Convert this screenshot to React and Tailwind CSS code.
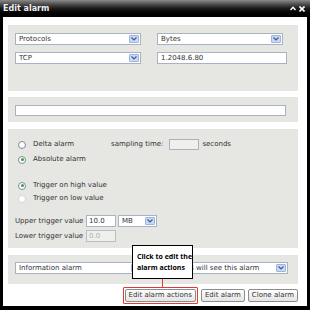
import React from 'react';

const Chevron = () => (
  <span className="flex items-center justify-center w-[10px] h-[8px] mr-[1px] bg-[#c9d9f2] border border-[#9fb5dd] rounded-[1px]">
    <svg width="6" height="4" viewBox="0 0 6 4">
      <path d="M0.5 0.5 L3 3 L5.5 0.5" stroke="#3b5a99" strokeWidth="1.2" fill="none" />
    </svg>
  </span>
);

const Select = ({ value, className = '' }) => (
  <div className={`flex items-center justify-between h-[12px] bg-white border border-[#a8b3c2] ${className}`}>
    <span className="pl-[3px] text-[7px] text-[#333] leading-none whitespace-nowrap">{value}</span>
    <Chevron />
  </div>
);

const Radio = ({ checked, faded, label }) => (
  <div className="flex items-center h-[13px]">
    <span
      className={`flex items-center justify-center w-[8px] h-[8px] rounded-full border bg-white ${
        faded ? 'border-[#d6d6d6]' : 'border-[#7d8aa0]'
      }`}
    >
      {checked && <span className="w-[3px] h-[3px] rounded-full bg-[#2fa92f]" />}
    </span>
    <span className="ml-[7px] text-[7px] text-[#333] leading-none">{label}</span>
  </div>
);

const Btn = ({ children }) => (
  <button className="h-[13px] px-[3px] bg-gradient-to-b from-white to-[#e4e4e4] border border-[#8c8c8c] rounded-[2px] text-[7px] text-[#333] leading-none">
    {children}
  </button>
);

export default function App() {
  return (
    <div
      className="w-[310px] h-[310px] bg-black flex flex-col overflow-hidden"
      style={{ fontFamily: '"DejaVu Sans", Verdana, sans-serif' }}
    >
      <div className="h-[17px] flex items-center justify-between px-[3px] bg-gradient-to-b from-[#8a8a8a] via-[#1a1a1a] to-black shrink-0">
        <span className="text-[8px] text-[#eee] font-bold leading-none">Edit alarm</span>
        <span className="flex items-center gap-[3px] pr-[2px] text-white">
          <svg width="6" height="5" viewBox="0 0 6 5">
            <path d="M0.5 4 L3 1.2 L5.5 4" stroke="white" strokeWidth="1.4" fill="none" />
          </svg>
          <svg width="6" height="6" viewBox="0 0 6 6">
            <path d="M0.5 0.5 L5.5 5.5 M5.5 0.5 L0.5 5.5" stroke="white" strokeWidth="1.6" />
          </svg>
        </span>
      </div>

      <div className="mx-[3px] mb-[4px] flex-1 bg-white pl-[5px] pr-[9px] pt-[8px] flex flex-col gap-[6px] relative">
        <div className="h-[66px] bg-[#e6e6e3] pt-[8px] pl-[7px] flex flex-col gap-[7px]">
          <div className="flex">
            <Select value="Protocols" className="w-[126px]" />
            <Select value="Bytes" className="w-[126px] ml-[16px]" />
          </div>
          <div className="flex">
            <Select value="TCP" className="w-[126px]" />
            <div className="w-[130px] ml-[16px] h-[12px] bg-white border border-[#a8b3c2] flex items-center pl-[3px] text-[7px] text-[#333] leading-none">
              1.2048.6.80
            </div>
          </div>
        </div>

        <div className="h-[25px] bg-[#e6e6e3] pt-[8px] pl-[7px]">
          <div className="w-[271px] h-[11px] bg-white border border-[#a8b3c2]" />
        </div>

        <div className="h-[119px] mt-[1px] bg-[#e6e6e3] pt-[9px] pl-[10px] flex flex-col">
          <div className="flex items-center">
            <Radio label="Delta alarm" />
            <span className="ml-[37px] text-[7px] text-[#333] leading-none">sampling time:</span>
            <span className="ml-[6px] w-[30px] h-[11px] bg-[#efefeb] border border-[#a8b3c2]" />
            <span className="ml-[3px] text-[7px] text-[#333] leading-none">seconds</span>
          </div>
          <div className="mt-[2px]">
            <Radio checked label="Absolute alarm" />
          </div>
          <div className="mt-[13px]">
            <Radio checked label="Trigger on high value" />
          </div>
          <Radio faded label="Trigger on low value" />
          <div className="mt-[10px] -ml-[3px] flex items-center">
            <span className="w-[71px] text-[7px] text-[#333] leading-none">Upper trigger value</span>
            <span className="w-[30px] h-[12px] bg-white border border-[#a8b3c2] flex items-center pl-[2px] text-[7px] text-[#333] leading-none">10.0</span>
            <Select value="MB" className="w-[39px] ml-[2px]" />
          </div>
          <div className="mt-[3px] -ml-[3px] flex items-center">
            <span className="w-[71px] text-[7px] text-[#333] leading-none">Lower trigger value</span>
            <span className="w-[30px] h-[12px] bg-[#efefeb] border border-[#b9bec6] flex items-center pl-[2px] text-[7px] text-[#b0b0b0] leading-none">0.0</span>
          </div>
        </div>

        <div className="h-[29px] mt-[1px] bg-[#e6e6e3] pt-[7px] pl-[7px] flex">
          <Select value="Information alarm" className="w-[128px]" />
          <Select value="All users will see this alarm" className="w-[128px] ml-[17px]" />
        </div>

        <div className="flex justify-end gap-[3px] -mt-[1px]">
          <div className="p-[1px] border border-[#e53935] rounded-[1px] -my-[2px] flex items-center">
            <Btn>Edit alarm actions</Btn>
          </div>
          <Btn>Edit alarm</Btn>
          <Btn>Clone alarm</Btn>
        </div>

        <div
          className="absolute left-[129px] top-[228px] w-[61px] h-[34px] bg-white border border-black flex flex-col justify-center pl-[4px]"
          style={{ fontFamily: '"Open Sans", sans-serif' }}
        >
          <span className="text-[7px] font-bold text-black leading-[11px] whitespace-nowrap">
            Click to edit the
          </span>
          <span className="text-[7px] font-bold text-black leading-[11px] whitespace-nowrap">
            alarm actions
          </span>
        </div>
        <div className="absolute left-[159px] top-[262px] w-[1px] h-[8px] bg-[#e53935]" />
      </div>
    </div>
  );
}
